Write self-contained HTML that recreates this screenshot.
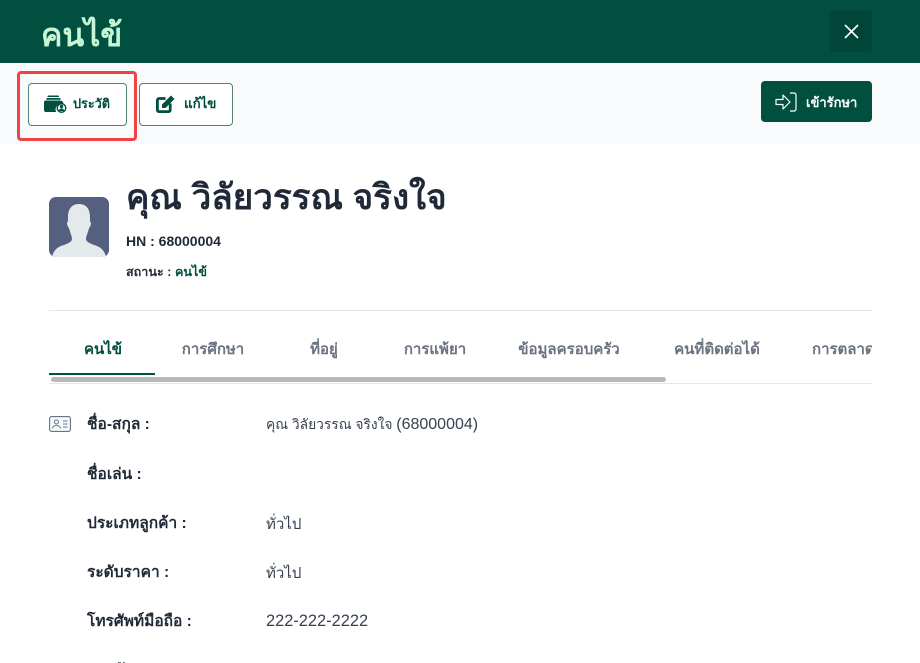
<!DOCTYPE html>
<html lang="th"><head><meta charset="utf-8"><style>
*{box-sizing:border-box}
html,body{margin:0;padding:0;width:920px;height:663px;overflow:hidden}
body{background:#fff;font-family:"Liberation Sans","Noto Sans CJK SC",sans-serif;color:#1f2937}
#w{position:relative;width:920px;height:663px;overflow:hidden}
.a{position:absolute;white-space:nowrap;line-height:1}
.btn{position:absolute;border:1px solid #4f8379;border-radius:4px;background:#fff}
.tab{font-size:15px;font-weight:700;color:#6b7280;transform:translateX(-50%);top:342px}
.lb{left:87px;font-size:15.5px;font-weight:700;color:#1f2937}
.v{left:266px;font-size:15px;color:#374151}
</style></head><body><div id="w">
<div class="a" style="left:0;top:0;width:920px;height:63px;background:#004f3f"></div>
<div class="a" style="left:41px;top:19px;font-size:32px;font-weight:700;color:#c6f6d5">คนไข้</div>
<div class="a" style="left:830px;top:10px;width:42px;height:42px;border-radius:4px;background:#004537"></div>
<svg class="a" style="left:844px;top:24px" width="15" height="15" viewBox="0 0 15 15"><path d="M1 1L14 14M14 1L1 14" stroke="#fff" stroke-width="1.600" fill="none"/></svg>

<div class="a" style="left:0;top:63px;width:920px;height:81px;background:#f8fafc"></div>
<div class="a" style="left:17px;top:71px;width:120px;height:70px;border:3px solid #ef4444;border-radius:4px"></div>
<div class="btn" style="left:28px;top:83px;width:99px;height:43px"></div>
<svg class="a" style="left:44px;top:95px" width="23" height="18" viewBox="0 0 23 18"><path d="M4.500.5h9.500a1 1 0 0 1 1 1V2H3.500v-.5a1 1 0 0 1 1-1zM2.500 3h14v1.800h-14z" fill="#004f3f"/><path d="M0 7.500A2 2 0 0 1 2 5.500h14a3.500 3.500 0 0 1 3.500 3.500H18a5.500 5.500 0 0 0-5.800 8H2a2 2 0 0 1-2-2z" fill="#004f3f"/><circle cx="17.500" cy="13" r="4.300" fill="#fff" stroke="#004f3f" stroke-width="1.400"/><circle cx="17.500" cy="11.500" r="1.700" fill="#004f3f"/><path d="M14.800 16a2.700 2.500 0 0 1 5.400 0z" fill="#004f3f"/></svg>
<div class="a" style="left:73px;top:98px;font-size:12.700px;font-weight:700;color:#004f3f">ประวัติ</div>
<div class="btn" style="left:139px;top:83px;width:94px;height:43px"></div>
<svg class="a" style="left:156px;top:95px" width="19" height="18" viewBox="0 0 19 18"><path d="M9.500 3.500H3A1.800 1.800 0 0 0 1.400 5.300V15A1.800 1.800 0 0 0 3 16.600h9.500A1.800 1.800 0 0 0 14.200 15V8.500" stroke="#004f3f" stroke-width="2.800" fill="none"/><path d="M6 9.500L15 .5l3.500 3.500-9 9H6z" fill="#004f3f"/></svg>
<div class="a" style="left:184px;top:97px;font-size:13.300px;font-weight:700;color:#004f3f">แก้ไข</div>
<div class="a" style="left:761px;top:81px;width:111px;height:41px;border-radius:4px;background:#004f3f"></div>
<svg class="a" style="left:775px;top:92px" width="23" height="20" viewBox="0 0 23 20"><path d="M1 7.500h7V3l7 7-7 7v-4.500H1z" stroke="#fff" stroke-width="1.200" fill="none" stroke-linejoin="round"/><path d="M15 1h4a2 2 0 0 1 2 2v14a2 2 0 0 1-2 2h-4" stroke="#fff" stroke-width="1.200" fill="none"/></svg>
<div class="a" style="left:806px;top:96px;font-size:13px;font-weight:700;color:#fff">เข้ารักษา</div>

<svg class="a" style="left:49px;top:197px" width="60" height="60" viewBox="0 0 60 60"><defs><clipPath id="c"><rect width="60" height="60" rx="7"/></clipPath></defs><g clip-path="url(#c)"><rect width="60" height="60" fill="#556080"/><path d="M30 7c-8 0-11 6-11 13 0 3 0 5-1 6 0 2 1 4 2 5 1 5 3 8 3 11 0 3-5 5-11 7-5 2-8 6-9 11h54c-1-5-4-9-9-11-6-2-11-4-11-7 0-3 2-6 3-11 1-1 2-3 2-5-1-1-1-3-1-6 0-7-3-13-11-13z" fill="#e4eaec"/></g></svg>
<div class="a" style="left:126px;top:180px;font-size:35px;font-weight:700;color:#1f2937">คุณ วิลัยวรรณ จริงใจ</div>
<div class="a" style="left:126px;top:234px;font-size:14px;font-weight:700;color:#1f2937">HN : 68000004</div>
<div class="a" style="left:126px;top:266px;font-size:12.600px;font-weight:700;color:#1f2937">สถานะ : <span style="color:#004f3f">คนไข้</span></div>

<div class="a" style="left:49px;top:310px;width:823px;height:1px;background:#e5e7eb"></div>
<div class="a tab" style="left:103px;color:#004f3f">คนไข้</div>
<div class="a tab" style="left:213px">การศึกษา</div>
<div class="a tab" style="left:324px">ที่อยู่</div>
<div class="a tab" style="left:435px">การแพ้ยา</div>
<div class="a tab" style="left:569px">ข้อมูลครอบครัว</div>
<div class="a tab" style="left:717px">คนที่ติดต่อได้</div>
<div class="a" style="left:812px;top:342px;width:60px;overflow:hidden;font-size:15px;font-weight:700;color:#6b7280">การตลาด</div>
<div class="a" style="left:49px;top:373px;width:106px;height:2px;background:#004f3f"></div>
<div class="a" style="left:51px;top:377px;width:615px;height:5px;border-radius:3px;background:#b9b9b9"></div>
<div class="a" style="left:49px;top:383px;width:823px;height:1px;background:#e5e7eb"></div>

<svg class="a" style="left:49px;top:416px" width="22" height="16" viewBox="0 0 22 16"><rect x=".6" y=".6" width="20.800" height="14.800" rx="2" stroke="#64748b" stroke-width="1.100" fill="#f8fafc"/><circle cx="7.500" cy="6" r="2" stroke="#64748b" fill="none"/><path d="M3.500 12.500c0-2 2-3 4-3s4 1 4 3M14 5h4.500M14 8h4.500M14 11h4.500" stroke="#64748b" fill="none"/></svg>
<div class="a lb" style="top:417px">ชื่อ-สกุล :</div>
<div class="a v" style="top:417px;font-size:13.800px">คุณ วิลัยวรรณ จริงใจ <span style="font-size:16px">(68000004)</span></div>
<div class="a lb" style="top:467px">ชื่อเล่น :</div>
<div class="a lb" style="top:516px">ประเภทลูกค้า :</div>
<div class="a v" style="top:517px">ทั่วไป</div>
<div class="a lb" style="top:565px">ระดับราคา :</div>
<div class="a v" style="top:566px">ทั่วไป</div>
<div class="a lb" style="top:614px">โทรศัพท์มือถือ :</div>
<div class="a v" style="top:613px;font-size:16.400px">222-222-2222</div>
<div class="a" style="left:118px;top:662px;width:3px;height:1px;background:#6b7280"></div>
<div class="a" style="left:123px;top:662px;width:2px;height:1px;background:#6b7280"></div>
</div></body></html>
